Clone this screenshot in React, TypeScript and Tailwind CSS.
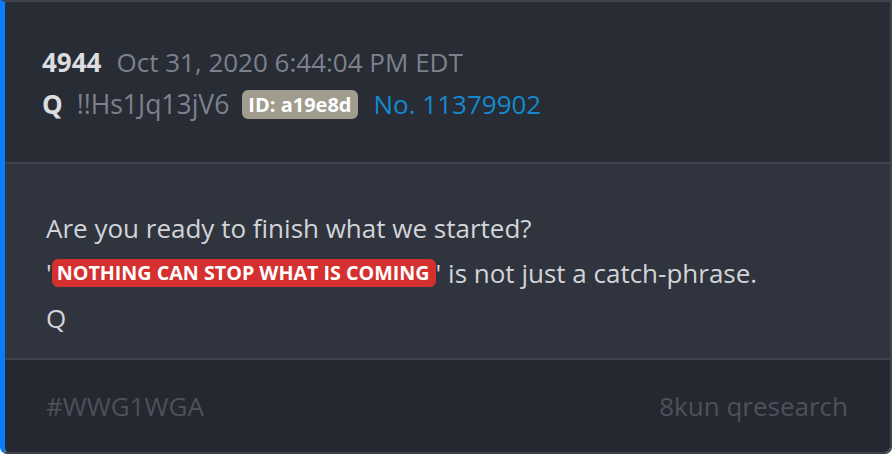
const PostCard = () => (
  <div className="flex h-[454px] w-[892px] flex-col overflow-hidden rounded-b-[7px] border-y-2 border-r-2 border-l-[5px] border-y-[#3f434d] border-r-[#3f434d] border-l-[#0a7cff] font-['Open_Sans',sans-serif] text-[26px]">
    <div className="flex h-[160px] flex-col justify-center bg-[#282c35] pl-[37px] pt-[2px] leading-[42px]">
      <div className="flex items-center gap-[15px]">
        <span className="font-bold text-[#dcdde0]">4944</span>
        <span className="text-[#7d818d]">Oct 31, 2020 6:44:04 PM EDT</span>
      </div>
      <div className="flex items-center">
        <span className="font-bold text-[#dcdde0]">Q</span>
        <span className="ml-[14px] text-[26.5px] text-[#7d818d]">!!Hs1Jq13jV6</span>
        <span className="ml-[13px] rounded-[6px] bg-[#a09d8e] px-[6px] text-[20px] font-bold leading-[29px] text-white">
          ID: a19e8d
        </span>
        <span className="ml-[16px] text-[#1589cf]">No. 11379902</span>
      </div>
    </div>
    <div className="flex h-[198px] flex-col justify-center border-y-2 border-[#3f434d] bg-[#2f343e] pl-[41px] pt-[24px] leading-[45px] text-[#d2d4d8]">
      <p>Are you ready to finish what we started?</p>
      <p className="flex items-center">
        '
        <span className="rounded-[6px] bg-[#d3302f] pl-[5px] pr-[6px] text-[19.7px] font-bold leading-[28px] text-white">
          NOTHING CAN STOP WHAT IS COMING
        </span>
        ' is not just a catch-phrase.
      </p>
      <p>Q</p>
    </div>
    <div className="flex flex-1 items-center justify-between bg-[#252830] pl-[41px] pr-[42px] text-[#4d515b]">
      <span>#WWG1WGA</span>
      <span>8kun qresearch</span>
    </div>
  </div>
);

export default function App() {
  return <PostCard />;
}
